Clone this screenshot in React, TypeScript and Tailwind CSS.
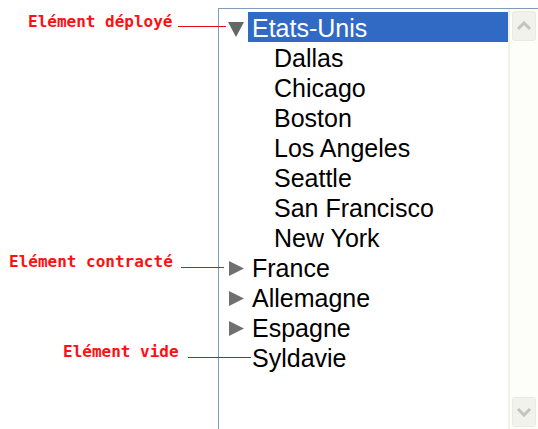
import React from 'react';

type Node = { label: string; children?: string[]; open?: boolean; selected?: boolean };

const tree: Node[] = [
  {
    label: 'Etats-Unis',
    open: true,
    selected: true,
    children: ['Dallas', 'Chicago', 'Boston', 'Los Angeles', 'Seattle', 'San Francisco', 'New York'],
  },
  { label: 'France', children: [] },
  { label: 'Allemagne', children: [] },
  { label: 'Espagne', children: [] },
  { label: 'Syldavie' },
];

const callouts = [
  { text: 'Elément déployé', left: 'left-[28px]', top: 'top-[14px]', gap: 'ml-[5px]', lineTop: 'mt-[12px]', width: 'w-[48px]' },
  { text: 'Elément contracté', left: 'left-[9px]', top: 'top-[254px]', gap: 'ml-[8px]', lineTop: 'mt-[13px]', width: 'w-[43px]' },
  { text: 'Elément vide', left: 'left-[63px]', top: 'top-[344px]', gap: 'ml-[9px]', lineTop: 'mt-[13px]', width: 'w-[63px]' },
];

function Arrow({ open }: { open: boolean }) {
  return (
    <svg width="16" height="17" viewBox="0 0 16 17" className="shrink-0">
      {open ? (
        <polygon points="0,2 16,2 8,17" fill="#666666" />
      ) : (
        <polygon points="1,1 16,8.5 1,16" fill="#707070" />
      )}
    </svg>
  );
}

function Row({ label, indent, arrow, selected }: { label: string; indent?: boolean; arrow?: 'open' | 'closed'; selected?: boolean }) {
  return (
    <div className="flex h-[30px] items-center pl-[9px]">
      <div className="flex w-[20px] items-center pt-[2px]">{arrow && <Arrow open={arrow === 'open'} />}</div>
      <div
        className={`flex h-[30px] flex-1 items-start ${indent ? 'pl-[26px]' : 'pl-[4px]'} ${
          selected ? 'bg-[#316ac5] text-white' : 'text-black'
        }`}
      >
        <span className="pt-[2px] leading-[28px]">{label}</span>
      </div>
    </div>
  );
}

function ScrollButton({ up }: { up?: boolean }) {
  return (
    <div className="mx-[2px] flex h-[30px] items-center justify-center rounded-[3px] border border-[#ebeae2] bg-[#f2f2ec]">
      <svg width="16" height="10" viewBox="0 0 16 10">
        <polyline
          points={up ? '2,8 8,2 14,8' : '2,2 8,8 14,2'}
          fill="none"
          stroke="#c4c4bc"
          strokeWidth="3"
        />
      </svg>
    </div>
  );
}

export default function App() {
  return (
    <div className="relative h-[429px] w-[538px] overflow-hidden bg-white">
      {/* Tree */}
      <div className="ml-[218px] mt-[8px] flex h-[422px] w-[320px] border-b border-l border-t border-[#7f9db9] font-['Liberation_Sans',Arial,sans-serif] text-[25px]">
        <div className="flex-1 pt-[3px]">
          {tree.map((n) => (
            <div key={n.label}>
              <Row
                label={n.label}
                arrow={n.children ? (n.open ? 'open' : 'closed') : undefined}
                selected={n.selected}
              />
              {n.open && n.children?.map((c) => <Row key={c} label={c} indent />)}
            </div>
          ))}
        </div>
        <div className="flex w-[30px] flex-col justify-between border-l-2 border-[#f1f0ea] bg-[#fdfdf9] py-[2px]">
          <ScrollButton up />
          <ScrollButton />
        </div>
      </div>

      {/* Callouts */}
      {callouts.map((c) => (
        <div key={c.text} className={`absolute ${c.left} ${c.top} flex items-start`}>
          <span className="font-['DejaVu_Sans_Mono',monospace] text-[16px] font-bold leading-[16px] text-[#ff1010]">{c.text}</span>
          <div className={`${c.gap} ${c.lineTop} ${c.width} h-px bg-[#e01010]`} />
        </div>
      ))}
    </div>
  );
}
